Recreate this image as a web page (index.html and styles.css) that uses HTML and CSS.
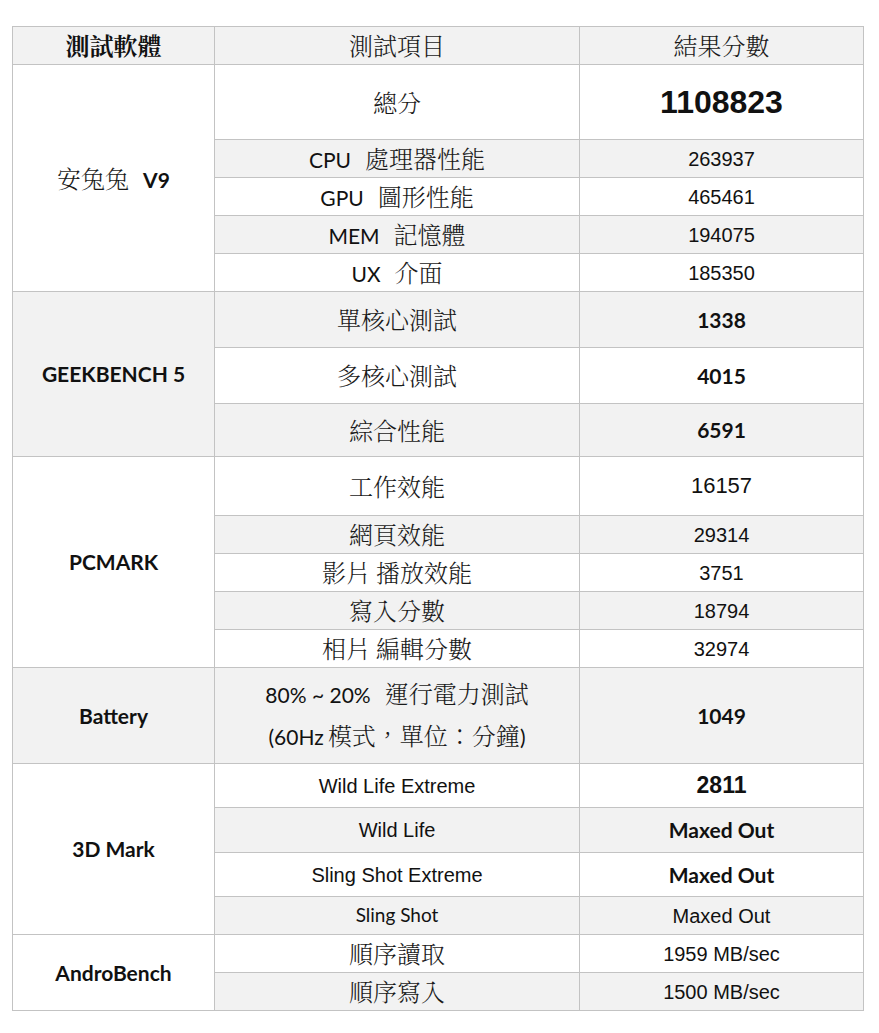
FILE: index.html
```html
<!DOCTYPE html>
<html lang="zh-Hant">
<head>
<meta charset="utf-8">
<title>跑分結果</title>
<link rel="stylesheet" href="styles.css">
</head>
<body>
<table class="sheet">
  <colgroup>
    <col class="c1"><col class="c2"><col class="c3">
  </colgroup>
  <thead>
    <tr class="h38 g">
      <th><span class="zh zh-b">測試軟體</span></th>
      <th><span class="zh">測試項目</span></th>
      <th><span class="zh">結果分數</span></th>
    </tr>
  </thead>
  <tbody>
    <tr class="h75">
      <td rowspan="5"><span class="zh">安兔兔</span><span class="gap"></span><span class="latb">V9</span></td>
      <td><span class="zh">總分</span></td>
      <td><span class="arial big">1108823</span></td>
    </tr>
    <tr class="h38 g">
      <td><span class="lat">CPU</span><span class="gap"></span><span class="zh">處理器性能</span></td>
      <td><span class="arial">263937</span></td>
    </tr>
    <tr class="h38">
      <td><span class="lat">GPU</span><span class="gap"></span><span class="zh">圖形性能</span></td>
      <td><span class="arial">465461</span></td>
    </tr>
    <tr class="h38 g">
      <td><span class="lat">MEM</span><span class="gap"></span><span class="zh">記憶體</span></td>
      <td><span class="arial">194075</span></td>
    </tr>
    <tr class="h38">
      <td><span class="lat">UX</span><span class="gap"></span><span class="zh">介面</span></td>
      <td><span class="arial">185350</span></td>
    </tr>

    <tr class="h56 g">
      <td rowspan="3"><span class="latb">GEEKBENCH 5</span></td>
      <td><span class="zh">單核心測試</span></td>
      <td><span class="latb">1338</span></td>
    </tr>
    <tr class="h56">
      <td><span class="zh">多核心測試</span></td>
      <td><span class="latb">4015</span></td>
    </tr>
    <tr class="h53 g">
      <td><span class="zh">綜合性能</span></td>
      <td><span class="latb">6591</span></td>
    </tr>

    <tr class="h59">
      <td rowspan="5"><span class="latb">PCMARK</span></td>
      <td><span class="zh">工作效能</span></td>
      <td><span class="arial mid">16157</span></td>
    </tr>
    <tr class="h38 g">
      <td><span class="zh">網頁效能</span></td>
      <td><span class="arial">29314</span></td>
    </tr>
    <tr class="h38">
      <td><span class="zh">影片 播放效能</span></td>
      <td><span class="arial">3751</span></td>
    </tr>
    <tr class="h38 g">
      <td><span class="zh">寫入分數</span></td>
      <td><span class="arial">18794</span></td>
    </tr>
    <tr class="h38">
      <td><span class="zh">相片 編輯分數</span></td>
      <td><span class="arial">32974</span></td>
    </tr>

    <tr class="h96 g">
      <td><span class="latb">Battery</span></td>
      <td class="two">
        <div><span class="lat">80% ~ 20%</span><span class="gap"></span><span class="zh">運行電力測試</span></div>
        <div><span class="lat">(60Hz</span> <span class="zh">模式，單位：分鐘</span><span class="lat">)</span></div>
      </td>
      <td><span class="latb">1049</span></td>
    </tr>

    <tr class="h44">
      <td rowspan="4"><span class="latb">3D Mark</span></td>
      <td><span class="arial">Wild Life Extreme</span></td>
      <td><span class="arial bold">2811</span></td>
    </tr>
    <tr class="h45 g">
      <td><span class="arial">Wild Life</span></td>
      <td><span class="latb">Maxed Out</span></td>
    </tr>
    <tr class="h44">
      <td><span class="arial">Sling Shot Extreme</span></td>
      <td><span class="latb">Maxed Out</span></td>
    </tr>
    <tr class="h38 g">
      <td><span class="lat small">Sling Shot</span></td>
      <td><span class="arial">Maxed Out</span></td>
    </tr>

    <tr class="h38">
      <td rowspan="2"><span class="latb">AndroBench</span></td>
      <td><span class="zh">順序讀取</span></td>
      <td><span class="arial">1959 MB/sec</span></td>
    </tr>
    <tr class="h38 g">
      <td><span class="zh">順序寫入</span></td>
      <td><span class="arial">1500 MB/sec</span></td>
    </tr>
  </tbody>
</table>
</body>
</html>
```

FILE: styles.css
```css
html, body {
  margin: 0;
  padding: 0;
  background: #ffffff;
}

body {
  font-family: "Lato", "Noto Sans CJK TC", sans-serif;
  color: #111111;
}

.sheet {
  border-collapse: collapse;
  table-layout: fixed;
  width: 851px;
  margin: 26px 0 0 12px;
}

.c1 { width: 202px; }
.c2 { width: 365px; }
.c3 { width: 284px; }

.sheet th,
.sheet td {
  border: 1px solid #c3c3c3;
  padding: 0;
  text-align: center;
  vertical-align: middle;
  font-weight: 400;
  line-height: 1.2;
  white-space: nowrap;
  background: #ffffff;
}

.sheet tr.g td,
.sheet tr.g th {
  background: #f2f2f2;
}

.h38 td, .h38 th { height: 37px; }
.h44 td { height: 43px; }
.h45 td { height: 44px; }
.h53 td { height: 52px; }
.h56 td { height: 55px; }
.h59 td { height: 58px; }
.h75 td { height: 74px; }
.h96 td { height: 95px; }

.gap {
  display: inline-block;
  width: 14px;
}

.zh {
  font-family: "Noto Serif CJK TC", "Noto Sans CJK TC", serif;
  font-size: 24px;
  font-weight: 300;
  color: #1a1a1a;
}

.zh-b {
  font-weight: 700;
  color: #111111;
}

.lat {
  font-family: "Lato", sans-serif;
  font-size: 21px;
  font-weight: 400;
}

.lat.small {
  font-size: 19px;
}

.latb {
  font-family: "Lato", sans-serif;
  font-size: 21px;
  font-weight: 700;
}

.arial {
  font-family: "Liberation Sans", Arial, sans-serif;
  font-size: 20px;
  font-weight: 400;
}

.arial.mid { font-size: 22px; }
.arial.big { font-size: 32px; font-weight: 700; }
.arial.bold { font-size: 23px; font-weight: 700; }

.two div {
  line-height: 38px;
}
```
